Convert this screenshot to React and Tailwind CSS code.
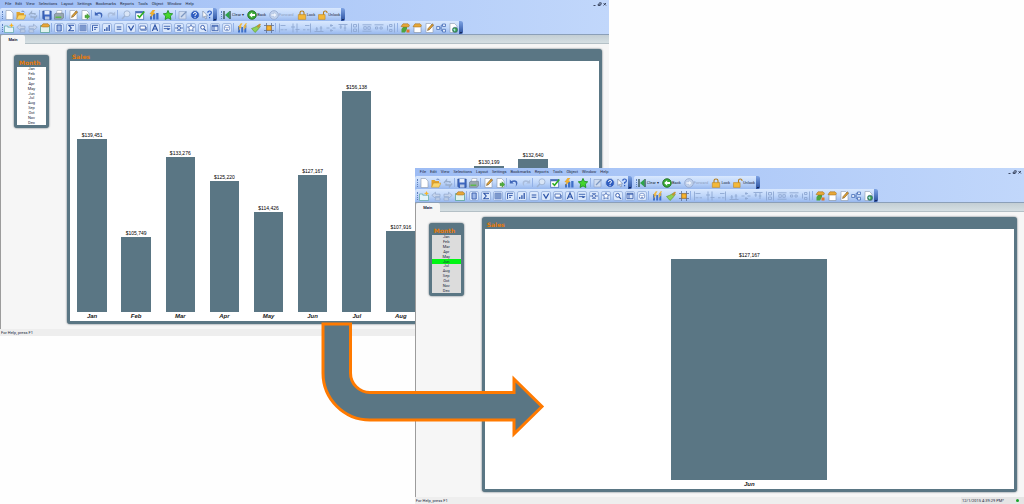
const SALES = [
  { month: "Jan", value: 139451 },
  { month: "Feb", value: 105749 },
  { month: "Mar", value: 133276 },
  { month: "Apr", value: 125220 },
  { month: "May", value: 114426 },
  { month: "Jun", value: 127167 },
  { month: "Jul", value: 156138 },
  { month: "Aug", value: 107916 },
  { month: "Sep", value: 118305 },
  { month: "Oct", value: 130199 },
  { month: "Nov", value: 132640 },
  { month: "Dec", value: 121870 },
];

const MENU = ["File", "Edit", "View", "Selections", "Layout", "Settings", "Bookmarks", "Reports", "Tools", "Object", "Window", "Help"];

// rounded light tile behind the "create object" icons
const tile = <rect x="0.5" y="0.5" width="9" height="9" rx="1.5" fill="#dbe8fb" stroke="#8aa6d6" strokeWidth="0.7" />;
const page = <path d="M2 .5h4.5L9 3v6.5H2z" fill="#fff" stroke="#8b98ad" strokeWidth="0.6" />;
const pencil = <path d="M3.5 7.5l.6-2L8.3.8l1.4 1.2-4.2 4.7z" fill="#e0a030" stroke="#5a4426" strokeWidth="0.5" />;
const hand = <path d="M1 3.5L3 .8h5l1.5 1.5-1 1.7H3.2z" fill="#e8a838" stroke="#9a6418" strokeWidth="0.5" />;

const ICONS = {
  new: page,
  open: (
    <>
      <path d="M.5 2h3l1 1H8v6H.5z" fill="#e2a32c" />
      <path d="M.5 9.3L2.5 5H10L8 9.3z" fill="#fbd66b" stroke="#b98218" strokeWidth="0.4" />
      <path d="M5.5 1.4q2-1.2 3 .9" fill="none" stroke="#4d6fb0" strokeWidth="0.8" />
    </>
  ),
  refresh: <path d="M1 5l2.5-3v1.7H7V5M9 5.5L6.5 8.7V7H3V5.5" fill="none" stroke="#98adcc" strokeWidth="1.3" />,
  save: (
    <>
      <path d="M.8 1h8.4v8.4H1.8l-1-1z" fill="#3d67c0" stroke="#24458f" strokeWidth="0.6" />
      <path d="M2.5 1h5v3.6h-5z" fill="#e6eefb" />
      <path d="M3 6.5h4.4v2.9H3z" fill="#b9c9e6" />
    </>
  ),
  print: (
    <>
      <path d="M3 .5h5L7.3 4H2.2z" fill="#fff" stroke="#8a97a8" strokeWidth="0.5" />
      <path d="M.5 4.2L2 3.2h7.2L9.7 4v3.7L8 9.3H.5z" fill="#98a6b0" stroke="#5e6c78" strokeWidth="0.5" />
      <path d="M1.5 6.5h5.8v1.6H1.5z" fill="#5eb84c" />
    </>
  ),
  edit: <>{page}{pencil}</>,
  export: (
    <>
      {page}
      <path d="M5 5.2h2V3.7L9.8 6.5 7 9.3V7.8H5z" fill="#4fae3a" stroke="#2d7a20" strokeWidth="0.4" />
    </>
  ),
  undo: <path d="M.8 1.5v4h4L3.4 4.2C6 2.8 8 4.3 6.5 8.8 10.2 5 8.3.6 2.2 2.9z" fill="#3f66b8" />,
  redo: <path d="M9.2 1.5v4h-4l1.4-1.3C4 2.8 2 4.3 3.5 8.8-.2 5 1.7.6 7.8 2.9z" fill="#a9bcdb" />,
  search: (
    <>
      <circle cx="6" cy="3.8" r="3" fill="#d9e5f6" stroke="#9eb2d2" />
      <path d="M3.8 6L1 9" stroke="#9eb2d2" strokeWidth="1.4" />
    </>
  ),
  check: (
    <>
      <rect x="0.7" y="1.5" width="8" height="7.8" fill="#fff" stroke="#4a70b8" strokeWidth="0.8" />
      <path d="M.7 1.5h8v1.8h-8z" fill="#4a70b8" />
      <path d="M2.5 5.2L4.5 7.3 9.3 1.5" fill="none" stroke="#2fae20" strokeWidth="1.6" />
    </>
  ),
  chart: (
    <>
      <path d="M1 6h2v3.5H1zM4 4h2.3v5.5H4zM7.2 3h2.3v6.5H7.2z" fill="#3f70c8" />
      <path d="M3.8 0L.8 4h2L1.5 7.2 6 3H4L6 0z" fill="#f7b52c" stroke="#c98410" strokeWidth="0.3" />
    </>
  ),
  star: <path d="M5 .4l1.4 3 3.3.4-2.4 2.3.6 3.4L5 7.9 2.1 9.5l.6-3.4L.3 3.8l3.3-.4z" fill="#45d62e" stroke="#17861a" strokeWidth="0.8" />,
  note: (
    <>
      <path d="M1 1.5h7v7.5H1z" fill="#cfdcf0" stroke="#92a8cc" strokeWidth="0.7" />
      <path d="M3 7l5.5-5.5" stroke="#7d97c2" strokeWidth="1.3" />
    </>
  ),
  help: (
    <>
      <circle cx="5" cy="5" r="4.4" fill="#2e5cc0" stroke="#b9cbe9" strokeWidth="0.8" />
      <path d="M3.5 4q0-1.6 1.5-1.6T6.5 4Q6.3 5 5 5.2v1M5 7v1" fill="none" stroke="#fff" />
    </>
  ),
  whatsThis: (
    <>
      <path d="M.8 1v6.5l1.6-1.3L3.6 9l1-.5-1.1-2.6h2z" fill="#fff" stroke="#5c6f90" strokeWidth="0.5" />
      <path d="M5.8 2.8q0-1.8 1.8-1.8t1.8 1.7Q9.4 4 7.6 4.6v1.2M7.6 6.9v1.4" fill="none" stroke="#2e5cc0" strokeWidth="1.2" />
    </>
  ),
  clear: (
    <>
      <path d="M2 1v8M8 1v8" stroke="#1f3f35" strokeWidth="1.2" />
      <path d="M7.4 1.2v7.6L3 5z" fill="#2ea44a" />
    </>
  ),
  back: (
    <>
      <circle cx="5" cy="5" r="4.3" fill="#39a935" stroke="#1b6420" strokeWidth="0.8" />
      <path d="M5.2 2.2L2.2 5l3 2.8V6H8V4H5.2z" fill="#fff" />
    </>
  ),
  forward: (
    <>
      <circle cx="5" cy="5" r="4.3" fill="#c4d4ee" stroke="#8fa5cb" strokeWidth="0.8" />
      <path d="M4.8 2.2L7.8 5l-3 2.8V6H2V4h2.8z" fill="#eef4fd" stroke="#8fa5cb" strokeWidth="0.3" />
    </>
  ),
  lock: (
    <>
      <path d="M3 5V2.8q0-1.8 2-1.8t2 1.8V5" fill="none" stroke="#b27c1c" strokeWidth="1.1" />
      <path d="M1.3 4.6h7.4v4.8H1.3z" fill="#f3b839" stroke="#b27c1c" strokeWidth="0.5" />
    </>
  ),
  unlock: (
    <>
      <path d="M5.5 5V2.6Q5.5 1 7.3 1T9 3" fill="none" stroke="#b27c1c" strokeWidth="1.1" />
      <path d="M.5 4.6h6.6v4.8H.5z" fill="#f3b839" stroke="#b27c1c" strokeWidth="0.5" />
    </>
  ),
  newSheet: (
    <>
      <path d="M.5 3h3.3v1.2h5.7v5.3h-9z" fill="#e3f4fb" stroke="#5fa6a4" strokeWidth="0.7" />
      <path d="M7.5 0l.8 1.7L10 2.3l-1.7.6-.8 1.8-.8-1.8L5 2.3l1.7-.6z" fill="#f9b521" />
    </>
  ),
  sheetLeft: <path d="M4.5 1.2L.8 4.3l3.7 3V5.6H9V3.2H4.5zM5 6.8h4v2.4H4z" fill="#c5d4ec" stroke="#92a8cc" strokeWidth="0.7" />,
  sheetRight: <path d="M5.5 1.2l3.7 3.1-3.7 3V5.6H1V3.2h4.5zM1 6.8h4l1 2.4H1z" fill="#c5d4ec" stroke="#92a8cc" strokeWidth="0.7" />,
  sheetProps: (
    <>
      <path d="M.5 2.5h9v7h-9z" fill="#dff2ee" stroke="#4c9c8c" strokeWidth="0.7" />
      {hand}
    </>
  ),
  listBox: <>{tile}<path d="M3 2h4.2v6H3z" fill="#9db7e8" stroke="#3a5fae" strokeWidth="0.9" /></>,
  stats: <>{tile}<path d="M7.3 3V2.2H2.8L5.2 5 2.8 7.7h4.5V7" fill="none" stroke="#2f55a8" strokeWidth="1.1" /></>,
  table: <>{tile}<path d="M2 2.2h6v5.6H2zM2 4h6M2 6h6M4 2.2v5.6M6 2.2v5.6" fill="none" stroke="#3a5fae" strokeWidth="0.7" /></>,
  multiBox: <>{tile}<path d="M2.5 8V2.3H8M4 4.5h3.5M4 6.3h2" fill="none" stroke="#2f55a8" strokeWidth="0.9" /></>,
  bars: <>{tile}<path d="M2 6h1.4v2H2zM4.2 4.2h1.4V8H4.2zM6.5 2h1.4v6H6.5z" fill="#3a5fae" /></>,
  input: <>{tile}<path d="M2.7 4h4.6M2.7 6.2h4.6" stroke="#2f55a8" strokeWidth="1.1" /></>,
  current: <>{tile}<path d="M2.5 3L5 7.3 7.7 2.5" fill="none" stroke="#2f55a8" strokeWidth="1.3" /></>,
  button: <>{tile}<path d="M2 3h5.4v3.2H2z" fill="#fff" stroke="#3a5fae" strokeWidth="0.8" /><path d="M2.6 7.2h5.6V4" fill="none" stroke="#3a5fae" strokeWidth="0.8" /></>,
  textObj: <>{tile}<path d="M2.3 8L5 2l2.7 6M3.4 6h3.2" fill="none" stroke="#2f55a8" strokeWidth="1.2" /></>,
  line: <>{tile}<path d="M1.8 3.3h6.4M1.8 5.6h6.4" stroke="#3a5fae" strokeWidth="0.9" /><path d="M5.5 4.5L7.8 7H5.2z" fill="#3a5fae" /></>,
  slider: <>{tile}<path d="M1 5h8M3 2.7h4M3 7.3h4" stroke="#3a5fae" strokeWidth="0.8" /><circle cx="5" cy="5" r="1.5" fill="#fff" stroke="#3a5fae" strokeWidth="0.8" /></>,
  bookmark: <>{tile}<path d="M5 1.5l1 2.3 2.5.2-1.9 1.6.6 2.5L5 6.8 2.8 8.1l.6-2.5L1.5 4 4 3.8z" fill="#fff" stroke="#3a5fae" strokeWidth="0.7" /></>,
  find: <>{tile}<circle cx="4.6" cy="4.3" r="1.9" fill="#fff" stroke="#2f55a8" strokeWidth="0.9" /><path d="M6 5.8l2 2" stroke="#2f55a8" strokeWidth="1.2" /></>,
  container: <>{tile}<path d="M2 2.3h6v5.4H2zM2 3.2h6M4 3v4.7" fill="none" stroke="#3a5fae" strokeWidth="0.9" /></>,
  custom: <>{tile}<circle cx="5" cy="5" r="2.8" fill="#fff" stroke="#6d8cc9" strokeWidth="0.8" /><path d="M3.5 4.5h1M5.5 4.5h1M4 6.3h2" stroke="#3a5fae" strokeWidth="0.8" /></>,
  wizard: (
    <>
      <path d="M1 3h2v6.5H1zM4.2 4h2v5.5h-2zM7.3 2h2v7.5h-2z" fill="#3f70c8" />
      <path d="M3.8.3L1 4.2h1.6L1.2 8 5 3.6H3.6L5.5.3zM8.6.3L6 4.2h1.4L6.3 7.6l3.5-4H8.4L10 .3z" fill="#f0b83e" />
    </>
  ),
  format: (
    <>
      <path d="M.5 5.5l3.2-1.2L8 1.8 9.3 3.6 6.5 7.2 4 9.5z" fill="#8fd058" stroke="#4d8a22" strokeWidth="0.5" />
      <path d="M5.8 3.5L9 .4l.9 1.4L7.2 4.9z" fill="#c98f2f" />
    </>
  ),
  grid: (
    <>
      <path d="M2.5 0v10M7.5 0v10M0 2.5h10M0 7.5h10" stroke="#5b6f96" strokeWidth="0.8" />
      <path d="M2.8 2.8h4.4v4.4H2.8z" fill="#f7b52f" stroke="#c27a0d" strokeWidth="0.6" />
    </>
  ),
  sheetHand: <><path d="M2 3h7v6.5H2z" fill="#fff" stroke="#7e8ba0" strokeWidth="0.6" />{hand}</>,
  docHand: <><path d="M1.5 9.5V6L4 3h3v3L5 9.5z" fill="#4da53e" />{hand}<path d="M6.5 6.5h3v3h-3z" fill="#e2752a" /></>,
  tree: <path d="M.7 3.5h3v3h-3zM6.5 1h3v2.5h-3zM6.5 6.3h3v2.7h-3zM3.7 5h1.5M5.2 2.2v5.4M5.2 2.2h1.3M5.2 7.6h1.3" fill="#dfe9fa" stroke="#4a70b8" strokeWidth="0.8" />,
  web: (
    <>
      {page}
      <circle cx="7" cy="6.8" r="2.6" fill="#3f9e48" stroke="#24548c" strokeWidth="0.5" />
      <path d="M5.2 6.2l1.6-.8.8 1.6-1 1.4z" fill="#a8dbea" />
    </>
  ),
  alignLeft: <path d="M1.5.5v9M2.5 2.5h5M2.5 6.8h3M6.5 6.8h2.5" />,
  alignCenter: <path d="M3 .5v9M7 .5v9M1 4h4M5.5 6.5H9.5" />,
  alignRight: <path d="M8.5.5v9M3 2.5h4.5M1 6.8h2.5M5 6.8h2.5" />,
  alignBottom: <path d="M.5 8.5h9M2.8 4v4M7 3v5M1.5 6h2.6M5.7 5h2.6" />,
  alignMiddle: <path d="M.5 5h3M6.5 5h3M5 1v3M5 6v3M4 2.5h3M4 7.5h3" />,
  alignTop: <path d="M.5 1.5h9M2.8 2v4M7 2v6M1.5 4h2.6M5.7 5h2.6" />,
  spaceV: <path d="M1.5.5v9M8.5.5v9M3.5 1.5h3v2.5h-3zM3.5 6h3v2.5h-3z" />,
  spaceH: <path d="M.5 1.8h9M.5 8.2h9M1.8 3.7h2.5v2.6H1.8zM5.8 3.7h2.5v2.6H5.8z" />,
  spaceLeft: <path d="M.5 1.8h9M1.5 4h2.2v2H1.5zM6 4h2.2v2H6z" />,
  spaceTop: <path d="M8.5.5v9M3.5 1.5H6v2H3.5zM3.5 6.5H6v2H3.5zM1.5 2.5v5" />,
};

const STANDARD = [
  ["new", "open", "refresh"],
  ["save", "print"],
  ["edit", "export"],
  ["undo", "redo"],
];
const TOOLS = ["search", "check", "chart", "star"];
const SHEET = ["newSheet", "sheetLeft", "sheetRight", "sheetProps"];
const OBJECTS = ["listBox", "stats", "table", "multiBox", "bars", "input", "current", "button", "textObj", "line", "slider", "bookmark", "find", "container", "custom"];
const ALIGN = ["alignLeft", "alignCenter", "alignRight", "alignBottom", "alignMiddle", "alignTop", "spaceV", "spaceH", "spaceLeft", "spaceTop"];
const DESIGN = ["docHand", "sheetHand", "edit", "tree", "web"];

function Icon({ name }) {
  return (
    <svg viewBox="0 0 10 10" className="size-[10px] shrink-0" fill="none" stroke={name.startsWith("align") || name.startsWith("space") ? "#8fa8d2" : "none"} strokeWidth="0.9" aria-hidden="true">
      {ICONS[name]}
    </svg>
  );
}

function Tools({ names, wide }) {
  return names.map((name) => (
    <button key={name} type="button" aria-label={name} className={wide ? "flex h-3 w-[14px] items-center justify-center" : "flex h-3 w-3 items-center justify-center"}>
      <Icon name={name} />
    </button>
  ));
}

function Separator() {
  return <span className="h-[9px] w-[2px] shrink-0 border-l border-[#93b1e6]" />;
}

function Strip({ children }) {
  return (
    <div className="flex h-[13px] shrink-0 items-center overflow-hidden rounded-[2px] bg-linear-to-b from-[#d9e8fe] via-[#c0d7fa] to-[#98b8ee]">
      <span className="ml-[2px] h-2 w-px border-l border-dotted border-[#5e80bf]" />
      {children}
      <span className="flex h-full w-[4px] shrink-0 items-end justify-center bg-linear-to-b from-[#7ea3e4] to-[#2a4f9e]">
        <span className="mb-px h-px w-[2px] bg-[#16295c]" />
      </span>
    </div>
  );
}

function TextTool({ icon, label, muted }) {
  return (
    <button type="button" className={muted ? "flex items-center text-[#8d9fc2]" : "flex items-center text-[#20283c]"}>
      <Icon name={icon} />
      {label}
    </button>
  );
}

function Caption() {
  return (
    <div className="flex h-2 items-center justify-between pr-[2px]">
      <nav className="flex items-center gap-[4px] pl-[5px]">
        {MENU.map((item) => (
          <button key={item} type="button">{item}</button>
        ))}
      </nav>
      <svg viewBox="0 0 14 6" className="h-[6px] w-[14px]" fill="none" stroke="#1d2740" strokeWidth="0.8" aria-hidden="true">
        <path d="M.5 4.5h2M10.5 2l2.5 2.5M13 2l-2.5 2.5" />
        <path d="M6.2 1.8h2v1.7M5.2 3h2v1.5h-2z" />
      </svg>
    </div>
  );
}

function Toolbars() {
  return (
    <header className="border-b border-[#8b9fb8] bg-linear-to-r from-[#9dbcf4] to-[#c1d7fb]">
      <Caption />
      <div className="flex gap-[2px]">
        <Strip>
          {STANDARD.map((group) => (
            <div key={group[0]} className="flex items-center">
              <Tools names={group} />
              <Separator />
            </div>
          ))}
          <Tools names={TOOLS} wide />
          <Separator />
          <Tools names={["note"]} />
          <Tools names={["help", "whatsThis"]} />
        </Strip>
        <Strip>
          <div className="flex items-center gap-[3px] pr-px">
            <TextTool icon="clear" label="Clear ▾" />
            <TextTool icon="back" label="Back" />
            <TextTool icon="forward" label="Forward" muted />
            <TextTool icon="lock" label="Lock" />
            <TextTool icon="unlock" label="Unlock" />
          </div>
        </Strip>
      </div>
      <div className="flex">
        <Strip>
          <Tools names={SHEET} />
          <Separator />
          <Tools names={OBJECTS} />
          <Separator />
          <Tools names={["wizard", "format"]} wide />
          <Tools names={["grid"]} />
          <Separator />
          <Tools names={ALIGN} />
          <Separator />
          <Tools names={DESIGN} />
        </Strip>
      </div>
    </header>
  );
}

function Panel({ title, className, children }) {
  return (
    <section className={`rounded-[3px] border-[3px] border-[#5a7684] bg-[#5a7684] shadow-[0_0_2px_#4b5a62] ${className}`}>
      <h2 className="h-[9px] pl-[2px] font-['DejaVu_Sans',sans-serif] text-[6px] leading-[9px] font-bold text-[#e87a08]">{title}</h2>
      {children}
    </section>
  );
}

function MonthList({ selected }) {
  return (
    <Panel title="Month" className="mt-[6px] w-[35px] shrink-0">
      <ul className={selected ? "grid h-[58px] grid-rows-12 bg-[#dcdcdc]" : "grid h-[58px] grid-rows-12 bg-white"}>
        {SALES.map(({ month }) => (
          <li key={month} className={month === selected ? "flex bg-[#00f514]" : "flex"}>
            <button type="button" className="w-full text-center leading-[4px]">{month}</button>
          </li>
        ))}
      </ul>
    </Panel>
  );
}

function SalesChart({ selected }) {
  const rows = selected ? SALES.filter((row) => row.month === selected) : SALES;
  // the axis does not start at zero; a lone bar takes the full scale
  const base = 79800;
  const top = selected ? rows[0].value : 156138;

  return (
    <Panel title="Sales" className="min-w-0 flex-1">
      <div className="flex bg-white font-['Liberation_Sans',Arial,sans-serif]">
        {rows.map(({ month, value }) => (
          <div key={month} className="flex min-w-0 flex-1 flex-col items-center">
            <div className="flex h-[251px] w-full flex-col items-center justify-end pt-[30px]">
              <span className="pb-px text-[5px] leading-[6px] text-black">${value.toLocaleString("en-US")}</span>
              <div
                className={selected ? "w-[29.5%] shrink-0 bg-[#5a7684]" : "w-2/3 shrink-0 bg-[#5a7684]"}
                style={{ height: `${((value - base) / (top - base)) * 100}%` }}
              />
            </div>
            <span className="h-[9px] text-[6px] leading-[9px] font-bold text-[#222] italic">{month}</span>
          </div>
        ))}
      </div>
    </Panel>
  );
}

function AppWindow({ selected, className }) {
  return (
    <div className={`w-[59.5%] bg-[#f6f6f6] ${className}`}>
      <Toolbars />
      <div className="border-l border-[#9c9c9c]">
        <div className="flex h-[9px] items-end border-b border-[#b4c0c6] bg-linear-to-b from-[#c3ced4] to-[#d5dfe3]">
          <button type="button" className="-mb-px h-[9px] w-6 rounded-t-[2px] bg-[#f6f6f6] font-bold">Main</button>
        </div>
        <main className="flex items-start gap-[18px] pt-[5px] pr-[7px] pb-[5px] pl-[13px]">
          <MonthList selected={selected} />
          <SalesChart selected={selected} />
        </main>
      </div>
      <footer className="flex h-[7px] items-center justify-between bg-[#eeeeee] pl-px">
        <span>For Help, press F1</span>
        <span className="flex h-full items-center bg-[#e5e5e5] pr-[5px] pl-px">
          <span>12/1/2015 4:39:29 PM*</span>
          <span className="ml-3 size-[3px] rounded-full bg-[#18a428]" />
        </span>
      </footer>
    </div>
  );
}

export default function App() {
  return (
    <div className="relative grid min-h-screen items-start bg-[#fefefe] font-[Roboto,sans-serif] text-[4px] leading-[6px] text-[#20283c]">
      <AppWindow className="col-start-1 row-start-1" />
      <AppWindow selected="Jun" className="z-10 col-start-1 row-start-1 mt-[168px] justify-self-end" />

      {/* Arrow from the Jun bar to the filtered window */}
      <svg viewBox="0 0 224 118" className="absolute top-[322px] left-[321px] z-20 h-[118px] w-[224px]" aria-hidden="true">
        <path
          d="M2 2H29.5V51A19.5 19.5 0 0 0 49 70.5H193V57L221 84.5 193 112V98H49A47 47 0 0 1 2 51Z"
          fill="#5a7684"
          stroke="#ff7a00"
          strokeWidth="3"
        />
      </svg>
    </div>
  );
}
